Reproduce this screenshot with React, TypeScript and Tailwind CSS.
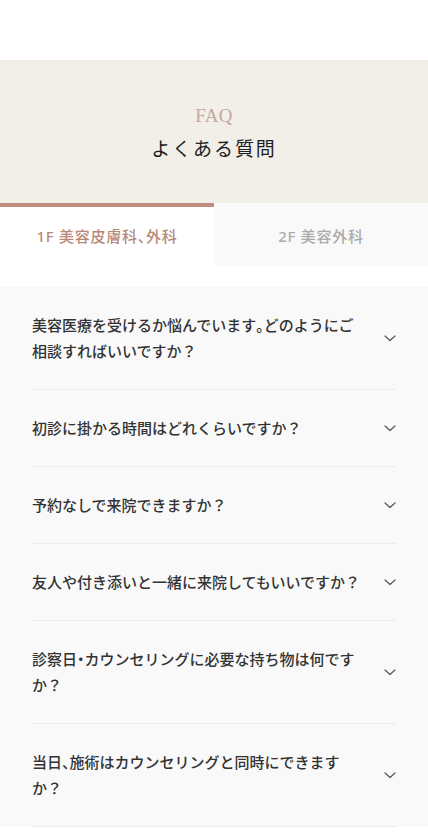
import React from 'react';

const faqs = [
  '美容医療を受けるか悩んでいます。どのようにご相談すればいいですか？',
  '初診に掛かる時間はどれくらいですか？',
  '予約なしで来院できますか？',
  '友人や付き添いと一緒に来院してもいいですか？',
  '診察日・カウンセリングに必要な持ち物は何ですか？',
  '当日、施術はカウンセリングと同時にできますか？',
];

// 句読点を半角幅で詰める
function Trim({ text }: { text: string }) {
  return (
    <>
      {text.split(/([、。・])/).map((part, i) =>
        /^[、。・]$/.test(part) ? (
          <span key={i} className="[font-feature-settings:'halt']">
            {part}
          </span>
        ) : (
          part
        )
      )}
    </>
  );
}

function Chevron() {
  return (
    <svg width="12" height="7" viewBox="0 0 12 7" fill="none" className="shrink-0">
      <path d="M1 1l5 4.5L11 1" stroke="#555" strokeWidth="1.2" strokeLinecap="round" strokeLinejoin="round" />
    </svg>
  );
}

export default function App() {
  return (
    <div
      className="min-h-[834px] bg-white"
      style={{ fontFamily: '"Noto Sans", "Noto Sans CJK JP", sans-serif' }}
    >
      <div className="h-[60px]" />

      {/* 見出し */}
      <div className="flex h-[143px] flex-col items-center justify-center bg-[#f2eee8] pt-[2px]">
        <p
          className="text-[19px] leading-[24px] tracking-[0.02em] text-[#c2aa9e]"
          style={{ fontFamily: '"Liberation Serif", "DejaVu Serif", serif' }}
        >
          FAQ
        </p>
        <h1 className="mt-[8px] text-[19px] font-normal leading-[26px] tracking-[0.1em] text-[#1e1e1e]">
          よくある質問
        </h1>
      </div>

      {/* タブ */}
      <div className="flex">
        <button className="flex h-[63px] w-1/2 items-center justify-center border-t-4 border-[#bf8d80] bg-white text-[15px] font-medium tracking-[0.05em] text-[#b98878]">
          <Trim text="1F 美容皮膚科、外科" />
        </button>
        <button className="flex h-[63px] w-1/2 items-center justify-center bg-[#f9f9f9] pt-[4px] text-[15px] font-medium tracking-[0.05em] text-[#aaaaaa]">
          2F 美容外科
        </button>
      </div>

      <div className="h-[21px]" />

      {/* 質問リスト */}
      <div className="bg-[#f9f9f9] px-[32px]">
        {faqs.map((q) => (
          <div
            key={q}
            className="flex items-center justify-between gap-3 border-b border-[#ececec] py-[25px]"
          >
            <p className="w-[332px] text-[15px] font-medium leading-[26px] text-[#333]">
              <Trim text={q} />
            </p>
            <Chevron />
          </div>
        ))}
      </div>
    </div>
  );
}
